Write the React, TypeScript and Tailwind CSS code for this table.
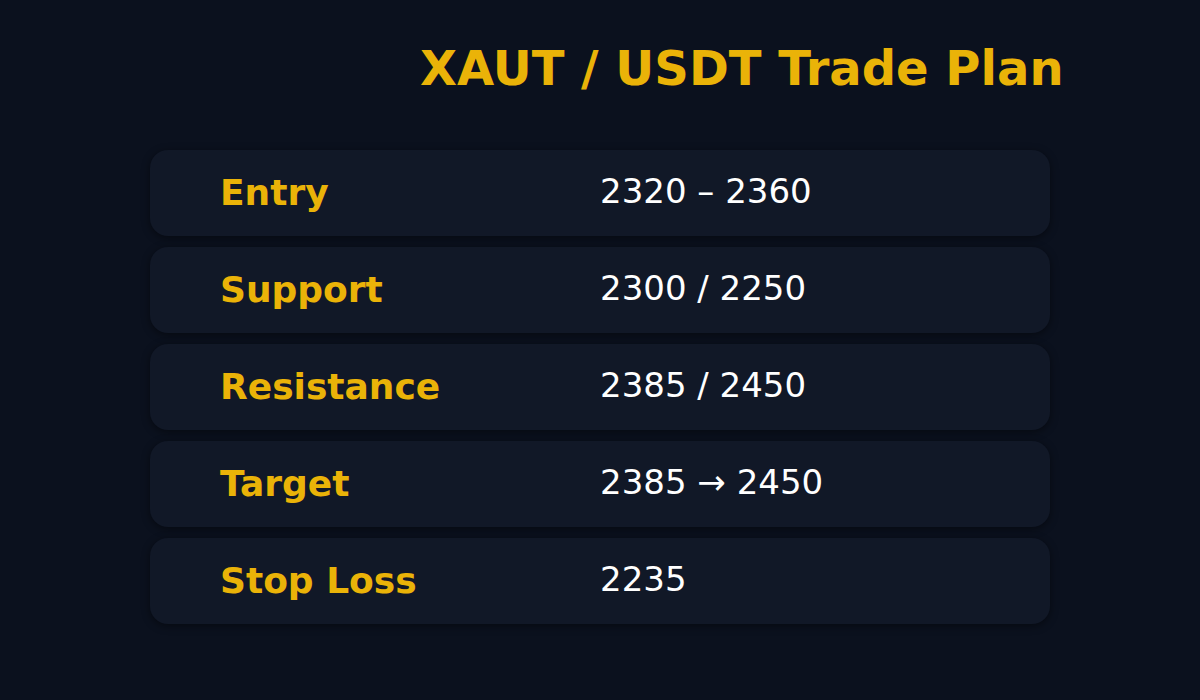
import React from 'react';

interface PlanRow {
  label: string;
  value: string;
}

const rows: PlanRow[] = [
  { label: 'Entry', value: '2320 – 2360' },
  { label: 'Support', value: '2300 / 2250' },
  { label: 'Resistance', value: '2385 / 2450' },
  { label: 'Target', value: '2385 → 2450' },
  { label: 'Stop Loss', value: '2235' },
];

const App: React.FC = () => {
  return (
    <div
      className="w-[1200px] h-[700px] bg-[#0b111e] overflow-hidden"
      style={{ fontFamily: '"DejaVu Sans", "Liberation Sans", sans-serif' }}
    >
      <div className="w-[900px] mx-auto pt-[40px]">
        <h1 className="ml-[270px] text-[48px] leading-[56px] font-bold text-[#eab308] whitespace-nowrap">
          XAUT / USDT Trade Plan
        </h1>
        <div className="mt-[54px] flex flex-col gap-[11px]">
          {rows.map((row) => (
            <div
              key={row.label}
              className="h-[86px] flex items-center pl-[70px] rounded-[18px] bg-[#111827] shadow-[0_2px_8px_rgba(0,0,0,0.45)]"
            >
              <span className="w-[380px] text-[36px] font-bold text-[#eab308]">
                {row.label}
              </span>
              <span className="text-[34px] text-white -mt-[4px]">{row.value}</span>
            </div>
          ))}
        </div>
      </div>
    </div>
  );
};

export default App;
